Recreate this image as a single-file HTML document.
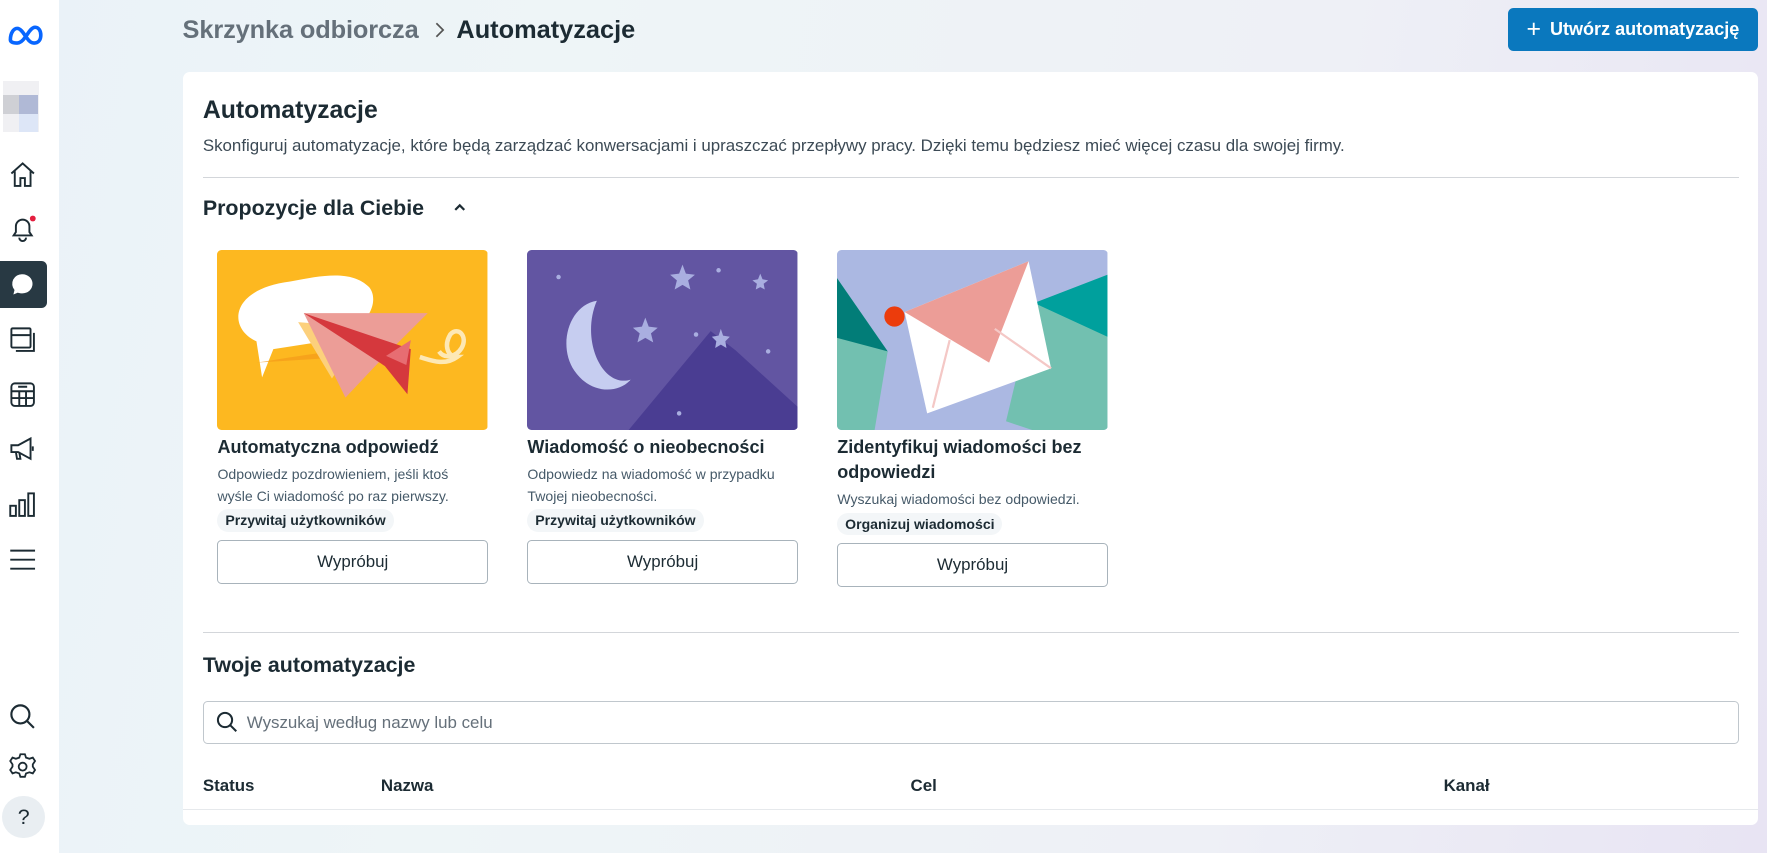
<!DOCTYPE html>
<html><head><meta charset="utf-8">
<style>
html,body{margin:0;padding:0;width:1767px;height:853px;overflow:hidden}
body{font-family:"Liberation Sans",sans-serif;color:#1c2b33}
#w{position:absolute;left:0;top:0;width:1568px;height:757px;zoom:1.12692;background:linear-gradient(100deg,#eaf2f8 0%,#eef5f7 30%,#eef0f6 70%,#e8e4f3 100%)}
.a{position:absolute}
#side{left:0;top:0;width:52px;height:757px;background:#fff}
.ic{position:absolute;left:7px;width:26px;height:26px}
.card{position:absolute;top:64px;left:162px;width:1398px;height:668px;background:#fff;border-radius:6px}
.hr{position:absolute;height:1px;background:#d3d6da}
.sg{position:absolute;width:240px}
.sg .img{width:240px;height:160px;border-radius:4px;overflow:hidden}
.sg h3{margin:4px 0 0;font-size:16px;font-weight:bold;line-height:22px;color:#1c2b33}
.sg p{margin:4px 0 0;font-size:12.5px;line-height:19px;color:#465a69;max-width:222px}
.tag{display:inline-block;margin-top:2px;background:#f3f6f8;border-radius:10px;padding:1px 7px;font-size:12.5px;font-weight:bold;line-height:18px}
.btn{margin-top:7px;height:39px;border:1px solid #a8b3bb;border-radius:4px;box-sizing:border-box;text-align:center;line-height:37px;font-size:15px;color:#1c2b33}
</style></head><body><div id="w">
<div id="side" class="a">
 <svg class="a" style="left:6px;top:22px" width="34" height="18" viewBox="0 0 34 18"><path d="M3 13c0-6 3-10 6-10 4 0 7 7 9 9 2 3 4 4 6 4 4 0 6-3 6-7s-2-7-5-7c-4 0-7 7-9 9-2 3-4 5-7 5-4 0-6-1-6-3z" fill="none" stroke="#0866ff" stroke-width="3.2"/></svg>
 <div class="a" style="left:3px;top:72px;width:32px;height:45px;background:#f0f0f3"></div>
 <div class="a" style="left:3px;top:84px;width:14px;height:17px;background:#cfd0d5"></div>
 <div class="a" style="left:17px;top:84px;width:17px;height:17px;background:#b0b9d6"></div>
 <div class="a" style="left:17px;top:101px;width:17px;height:16px;background:#dde6f7"></div>
 <svg class="ic" style="top:142px" viewBox="0 0 26 26" fill="none" stroke="#1c2b33" stroke-width="1.7"><path d="M3 12L13 3l10 9M6 10v13h5v-7h4v7h5V10"/></svg>
 <svg class="ic" style="top:190px" viewBox="0 0 26 26" fill="none" stroke="#1c2b33" stroke-width="1.7"><path d="M5 19h16l-2-3v-5a6 6 0 0 0-12 0v5zM10 21a3 3 0 0 0 6 0"/><circle cx="22" cy="4" r="2.6" fill="#e41e3f" stroke="none"/></svg>
 <div class="a" style="left:0;top:232px;width:42px;height:41px;background:#283943;border-radius:0 5px 5px 0"></div>
 <svg class="a" style="left:9px;top:241px" width="22" height="22" viewBox="0 0 22 22"><path d="M11 2a9 8.5 0 0 1 0 17c-2 0-3-.3-4-.7L3 20l1-4A8.5 8.5 0 0 1 11 2z" fill="#fff"/></svg>
 <svg class="ic" style="top:288px" viewBox="0 0 26 26" fill="none" stroke="#1c2b33" stroke-width="1.7"><rect x="3" y="3" width="17" height="17" rx="1"/><path d="M3 9h17M23 7v16H7"/></svg>
 <svg class="ic" style="top:337px" viewBox="0 0 26 26" fill="none" stroke="#1c2b33" stroke-width="1.7"><rect x="3" y="3" width="20" height="20" rx="3"/><path d="M3 10h20M3 16h20M10 10v13M16 10v13M9 6h8"/></svg>
 <svg class="ic" style="top:385px" viewBox="0 0 26 26" fill="none" stroke="#1c2b33" stroke-width="1.7"><path d="M3 10h6l11-6v18L9 16H3zM7 16l1 6h3l-1-6M22 11v4"/></svg>
 <svg class="ic" style="top:435px" viewBox="0 0 26 26" fill="none" stroke="#1c2b33" stroke-width="1.7"><rect x="2" y="14" width="5" height="9"/><rect x="10" y="9" width="5" height="14"/><rect x="18" y="3" width="5" height="20"/></svg>
 <svg class="ic" style="top:484px" viewBox="0 0 26 26" fill="none" stroke="#1c2b33" stroke-width="1.7"><path d="M2 5h22M2 13h22M2 21h22"/></svg>
 <svg class="ic" style="top:623px" viewBox="0 0 26 26" fill="none" stroke="#1c2b33" stroke-width="1.9"><circle cx="11" cy="11" r="8"/><path d="M17 17l6 6"/></svg>
 <svg class="ic" style="top:667px" viewBox="0 0 26 26" fill="none" stroke="#1c2b33" stroke-width="1.6"><circle cx="13" cy="13" r="3.5"/><path d="M11 2h4l1 3 3 1 3-1 2 3-2 3v2l2 3-2 3-3-1-3 1-1 3h-4l-1-3-3-1-3 1-2-3 2-3v-2L2 8l2-3 3 1 3-1z"/></svg>
 <div class="a" style="left:2px;top:706px;width:38px;height:38px;border-radius:50%;background:#e9eef2;text-align:center;line-height:38px;font-size:19px;color:#1c2b33">?</div>
</div>
<div class="a" style="left:162px;top:13px;font-size:22.5px;line-height:28px;color:#65707a;font-weight:bold;letter-spacing:-.1px">Skrzynka odbiorcza</div>
<svg class="a" style="left:384px;top:19px" width="12" height="16" viewBox="0 0 12 16"><path d="M3 2l6 6-6 6" fill="none" stroke="#555" stroke-width="1.5"/></svg>
<div class="a" style="left:405px;top:13px;font-size:22.5px;line-height:28px;color:#1c2b33;font-weight:bold">Automatyzacje</div>
<div class="a" style="left:1338px;top:7px;width:222px;height:38px;background:#0a78be;border-radius:5px;color:#fff;font-weight:bold;font-size:16px;line-height:38px;text-align:center"><span style="font-weight:normal;font-size:22px;vertical-align:-2px;margin-right:8px">+</span>Utwórz automatyzację</div>
<div class="card">
 <div class="a" style="left:18px;top:20px;font-size:22px;font-weight:bold;line-height:28px">Automatyzacje</div>
 <div class="a" style="left:18px;top:56px;font-size:15px;color:#3c4a55;line-height:20px">Skonfiguruj automatyzacje, które będą zarządzać konwersacjami i upraszczać przepływy pracy. Dzięki temu będziesz mieć więcej czasu dla swojej firmy.</div>
 <div class="hr" style="left:18px;top:93px;width:1363px"></div>
 <div class="a" style="left:18px;top:109px;font-size:19px;font-weight:bold;line-height:24px">Propozycje dla Ciebie</div>
 <svg class="a" style="left:240px;top:115px" width="12" height="10" viewBox="0 0 12 10"><path d="M2 7l4-4 4 4" fill="none" stroke="#1c2b33" stroke-width="2"/></svg>
 <div class="sg" style="left:31px;top:158px">
  <div class="img"><svg width="240" height="160" viewBox="0 0 240 160"><rect width="240" height="160" fill="#fdb820"/><path d="M65 28c30-6 55-10 70 5 10 12 0 40-40 48L50 88l-10 25-5-32C10 70 10 35 65 28z" fill="#fff"/><path d="M35 100c20-3 60-10 110-15l-30 10z" fill="#f49a1a" opacity=".7"/><path d="M72 64l30 50 30-45z" fill="#fcd07c"/><path d="M77 56h110l-40 40-33 35z" fill="#ec9d97"/><path d="M77 56l95 32-3 40-20-25z" fill="#d5383d"/><path d="M150 94l18 8 4-22" fill="#e76d72"/><path d="M180 95c10 3 22 8 33 0-8 0-12-10-6-20 7-8 16 2 10 12-5 8-15 10-20 3" fill="none" stroke="#fde8b5" stroke-width="4"/></svg></div>
  <h3>Automatyczna odpowiedź</h3>
  <p>Odpowiedz pozdrowieniem, jeśli ktoś wyśle Ci wiadomość po raz pierwszy.</p>
  <div class="tag">Przywitaj użytkowników</div>
  <div class="btn">Wypróbuj</div>
 </div>
 <div class="sg" style="left:306px;top:158px">
  <div class="img"><svg width="240" height="160" viewBox="0 0 240 160"><rect width="240" height="160" fill="#6255a2"/><path d="M62 45c-25 4-35 40-20 62 15 22 40 20 50 8-25 8-45-35-30-70z" fill="#c6cdf0"/><path d="M90 160l73-88 22 17 55 50v21z" fill="#4a3d92"/><g fill="#a9aee0"><path d="M138 13l3 8 8 1-6 5 2 8-7-4-7 4 2-8-6-5 8-1z"/><path d="M105 60l3 8 8 1-6 5 2 8-7-4-7 4 2-8-6-5 8-1z"/><path d="M172 70l2 6 6 1-4 4 1 6-5-3-5 3 1-6-4-4 6-1z"/><path d="M207 21l2 5 5 1-4 3 1 5-4-2-4 2 1-5-4-3 5-1z"/><circle cx="28" cy="24" r="2"/><circle cx="170" cy="18" r="2"/><circle cx="150" cy="75" r="2"/><circle cx="214" cy="90" r="2"/><circle cx="135" cy="145" r="2"/></g></svg></div>
  <h3>Wiadomość o nieobecności</h3>
  <p>Odpowiedz na wiadomość w przypadku Twojej nieobecności.</p>
  <div class="tag">Przywitaj użytkowników</div>
  <div class="btn">Wypróbuj</div>
 </div>
 <div class="sg" style="left:581px;top:158px">
  <div class="img"><svg width="240" height="160" viewBox="0 0 240 160"><rect width="240" height="160" fill="#abb8e2"/><path d="M0 25l45 65-15 90H0z" fill="#72c0b0"/><path d="M0 25l45 65-45-12z" fill="#027d78"/><path d="M175 47l65-25v160l-90-30z" fill="#72c0b0"/><path d="M175 47l65-25v55z" fill="#00a09d"/><path d="M60 55l110-45 20 95-110 40z" fill="#fff"/><path d="M60 55l110-45-35 90z" fill="#ec9d97"/><path d="M100 80l-15 60M140 70l50 35" stroke="#f4c8c6" stroke-width="2"/><circle cx="51" cy="59" r="9" fill="#ec3c0c"/></svg></div>
  <h3>Zidentyfikuj wiadomości bez odpowiedzi</h3>
  <p>Wyszukaj wiadomości bez odpowiedzi.</p>
  <div class="tag">Organizuj wiadomości</div>
  <div class="btn">Wypróbuj</div>
 </div>
 <div class="hr" style="left:18px;top:497px;width:1363px"></div>
 <div class="a" style="left:18px;top:515px;font-size:19px;font-weight:bold;line-height:24px">Twoje automatyzacje</div>
 <div class="a" style="left:18px;top:558px;width:1363px;height:38px;border:1px solid #c0c7cd;border-radius:4px;box-sizing:border-box"></div>
 <svg class="a" style="left:30px;top:567px" width="20" height="20" viewBox="0 0 20 20" fill="none" stroke="#1c2b33" stroke-width="1.8"><circle cx="8" cy="8" r="6.3"/><path d="M12.5 12.5l5.5 5.5"/></svg>
 <div class="a" style="left:57px;top:568px;font-size:15px;color:#65707a;line-height:20px">Wyszukaj według nazwy lub celu</div>
 <div class="a" style="left:18px;top:624px;font-size:15px;font-weight:bold;line-height:20px">Status</div>
 <div class="a" style="left:176px;top:624px;font-size:15px;font-weight:bold;line-height:20px">Nazwa</div>
 <div class="a" style="left:646px;top:624px;font-size:15px;font-weight:bold;line-height:20px">Cel</div>
 <div class="a" style="left:1119px;top:624px;font-size:15px;font-weight:bold;line-height:20px">Kanał</div>
 <div class="hr" style="left:0;top:654px;width:1398px;background:#e6e9ec"></div>
</div>
</div></body></html>
